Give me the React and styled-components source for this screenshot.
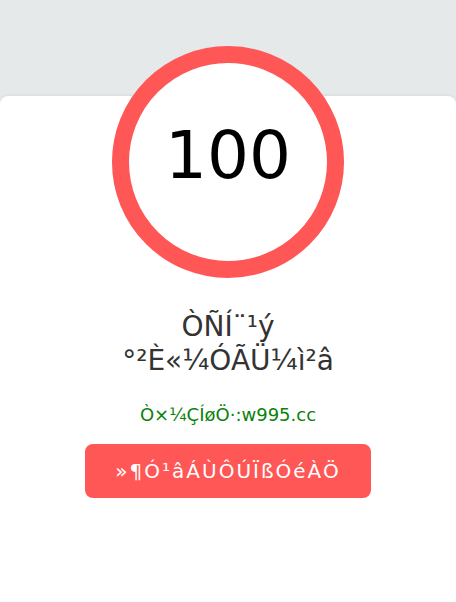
import React from "react";
import styled, { createGlobalStyle } from "styled-components";

const Global = createGlobalStyle`
  html, body {
    margin: 0;
    padding: 0;
    background: #e5e9ea;
    font-family: "DejaVu Sans", "Noto Sans", sans-serif;
  }
`;

const Page = styled.div`
  display: flex;
  flex-direction: column;
  min-height: 100vh;
  padding-top: 96px;
  box-sizing: border-box;
`;

const Card = styled.main`
  flex: 1;
  background: #ffffff;
  border-radius: 8px 8px 0 0;
  box-shadow: 0 -1px 3px rgba(0, 0, 0, 0.06);
  display: flex;
  flex-direction: column;
  align-items: center;
`;

const Ring = styled.div`
  width: 232px;
  height: 232px;
  margin-top: -50px;
  box-sizing: border-box;
  border: 17px solid #ff5656;
  border-radius: 50%;
  background: #ffffff;
  display: flex;
  align-items: center;
  justify-content: center;
  padding-bottom: 12px;
`;

const Score = styled.span`
  font-size: 66px;
  color: #000;
  line-height: 1;
`;

const Title = styled.h1`
  margin: 32px 0 0;
  font-size: 28px;
  font-weight: normal;
  line-height: 33.5px;
  color: #333;
  text-align: center;
`;

const Site = styled.p`
  margin: 27px 0 0;
  font-size: 18px;
  color: #0a820a;
`;

const EnterButton = styled.button`
  margin-top: 19px;
  width: 286px;
  height: 54px;
  border: none;
  border-radius: 8px;
  background: #ff5656;
  color: #ffffff;
  font-family: inherit;
  font-size: 20px;
  letter-spacing: 2px;
  cursor: pointer;
`;

export default function App() {
  return (
    <Page>
      <Global />
      <Card>
        <Ring>
          <Score>100</Score>
        </Ring>
        <Title>
          ÒÑÍ¨¹ý
          <br />
          °²È«¼ÓÃÜ¼ì²â
        </Title>
        <Site>Ò×¼ÇÍøÖ·:w995.cc</Site>
        <EnterButton>{"»¶Ó\u00AD¹âÁÙÔÚÏßÓéÀÖ"}</EnterButton>
      </Card>
    </Page>
  );
}
